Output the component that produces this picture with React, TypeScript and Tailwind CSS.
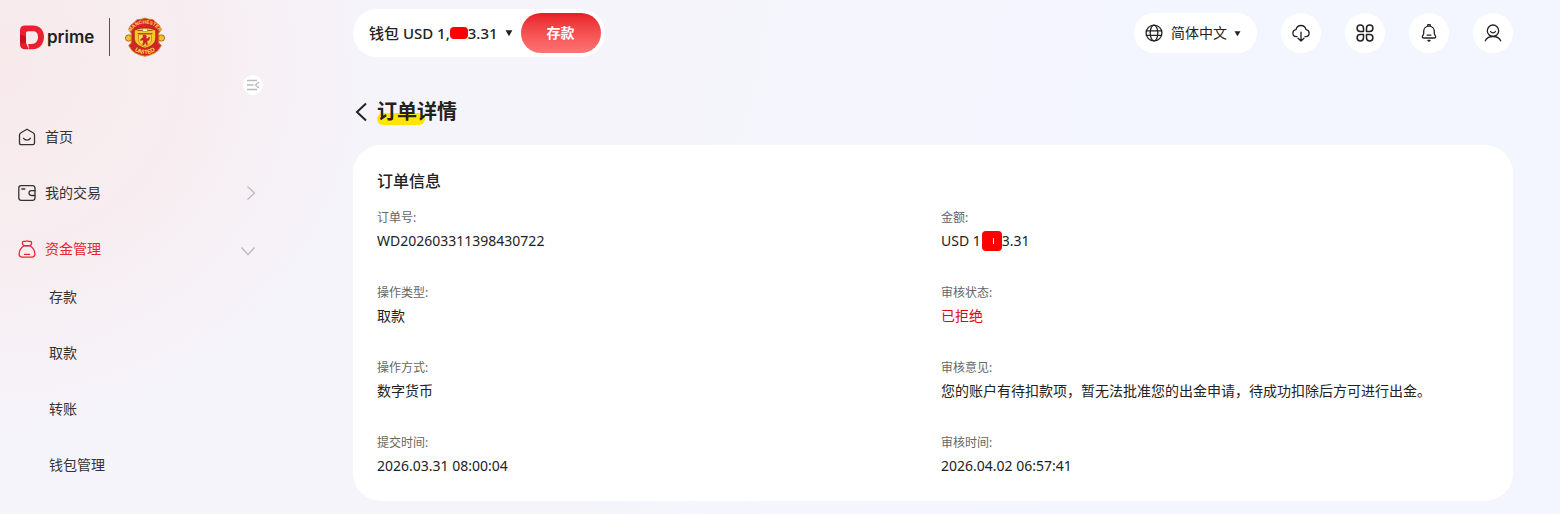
import React, { useState } from 'react'

type Field = {
  label: string
  value: React.ReactNode
  danger?: boolean
}

const subMenu = ['存款', '取款', '转账', '钱包管理']

// Order fields, two per row
const orderFields: Field[] = [
  { label: '订单号:', value: 'WD202603311398430722' },
  {
    label: '金额:',
    value: (
      <span className="flex items-center">
        USD 1
        <span className="ml-px flex h-5 w-5 items-center justify-center rounded bg-[#fe0000]">
          <span className="ml-1 h-1.5 w-px bg-white" />
        </span>
        3.31
      </span>
    ),
  },
  { label: '操作类型:', value: '取款' },
  { label: '审核状态:', value: '已拒绝', danger: true },
  { label: '操作方式:', value: '数字货币' },
  { label: '审核意见:', value: '您的账户有待扣款项，暂无法批准您的出金申请，待成功扣除后方可进行出金。' },
  { label: '提交时间:', value: '2026.03.31 08:00:04' },
  { label: '审核时间:', value: '2026.04.02 06:57:41' },
]

const Caret = ({ size }: { size: number }) => (
  <svg width={size} height={size} viewBox="0 0 8 8" fill="#222" aria-hidden="true">
    <path d="M0.600 1.300h6.800L4 7.200z" />
  </svg>
)

const BrandMark = () => (
  <svg width="25" height="25" viewBox="0 0 25 25" aria-hidden="true">
    <path d="M5 0.500H13C19.500 0.500 24 5 24 11.800C24 19 19.500 24.300 12.700 24.300H9L8.200 19H11.800C15.600 19 18 16 18 12C18 8.200 16.200 6.200 12.800 6.200H8C6.600 6.200 6 6.900 6 8.200V19L0 20.500V5.500C0 2.200 1.800 0.500 5 0.500Z" fill="#ec1f2e" />
    <path d="M0 9.500L6 11.500V18.300L4 22L0 19Z" fill="#c8131f" />
    <path d="M0 18.500L6 17.800L8.800 24.300H5C2 24.300 0 22.600 0 19.500Z" fill="#e51c2b" />
  </svg>
)

const ClubCrest = () => (
  <svg width="40" height="40" viewBox="0 0 40 40" role="img" aria-label="Manchester United">
    <circle cx="3.600" cy="21" r="3.200" fill="#f4c21f" stroke="#8c2a16" strokeWidth="0.6" />
    <circle cx="36.400" cy="21" r="3.200" fill="#f4c21f" stroke="#8c2a16" strokeWidth="0.6" />
    <path d="M20 1L24 2.300L28 2.500L30.500 5.200L34 8L36.500 12.500L33.800 16V26L36.300 28.500L33 33.500L29.500 36L25 38L20 39.200L15 38L10.500 36L7 33.500L3.700 28.500L6.200 26V16L3.500 12.500L6 8L9.500 5.200L12 2.500L16 2.300Z" fill="#d5232b" stroke="#c98a1c" strokeWidth="1" />
    <path d="M9.300 13.200Q20 8.200 30.700 13.200V21C30.700 26 26.500 29.500 20 31.200C13.500 29.500 9.300 26 9.300 21Z" fill="#f7c928" stroke="#8c2a16" strokeWidth="0.7" />
    <path d="M12.500 13.500h15M12.500 16.500h15" stroke="#a04a18" strokeWidth="0.9" />
    <path d="M17.500 14.500V12h1v-1h.8v1h1.400v-1h.8v1h1v2.500Z" fill="#fff3c0" stroke="#a04a18" strokeWidth="0.4" />
    <path d="M13.500 17.500h13v4.800c0 3.600-2.700 6-6.500 7.200-3.800-1.200-6.500-3.600-6.500-7.200Z" fill="#f9d84a" stroke="#c23a1c" strokeWidth="0.500" />
    <path d="M18.300 18l2.600.2.600 1.600-.8 1.400 2.300.6.900-1.800.9.600-.9 2.600-2 .8.700 3.600-1.300.2-1-2.800-1.500 3-1.200-.3.900-3.700-1.300-1.200-1.400.9-.4-.8 1.700-2 1.600-.3-.8-1.200Z" fill="#cf1f27" stroke="#cf1f27" strokeWidth="0.500" />
    <path id="crest-top" d="M5.800 15.500A15 13.200 0 0 1 34.200 15.500" fill="none" />
    <path id="crest-bottom" d="M6 29Q11 37 20 37T34 29" fill="none" />
    <text fontSize="4.800" fontWeight="700" fill="#ffe04a" textAnchor="middle" fontFamily="Liberation Sans, sans-serif">
      <textPath href="#crest-top" startOffset="50%">MANCHESTER</textPath>
    </text>
    <text fontSize="6" fontWeight="700" fill="#ffe04a" textAnchor="middle" fontFamily="Liberation Sans, sans-serif">
      <textPath href="#crest-bottom" startOffset="50%">UNITED</textPath>
    </text>
  </svg>
)

const lineIcon = {
  width: 18,
  height: 18,
  viewBox: '0 0 18 18',
  fill: 'none',
  stroke: 'currentColor',
  strokeWidth: 1.3,
  strokeLinecap: 'round' as const,
  strokeLinejoin: 'round' as const,
  'aria-hidden': true,
}

const HomeIcon = () => (
  <svg {...lineIcon}>
    <path d="M9 1.200L15 4.700C16 5.300 16.500 6 16.500 7V15C16.500 16.200 16 16.700 14.800 16.700H3.200C2 16.700 1.500 16.200 1.500 15V7C1.500 6 2 5.300 3 4.700Z" />
    <path d="M5.600 10.300C7.200 12.600 10.800 12.600 12.400 10.300" />
  </svg>
)

const WalletIcon = () => (
  <svg {...lineIcon}>
    <path d="M17 6.800V4.200C17 2.600 16.200 1.700 14.600 1.700H3.200C1.600 1.700.8 2.600.8 4.200V13.800C.8 15.400 1.600 16.300 3.200 16.300H14.600C16.200 16.300 17 15.400 17 13.800V11.600" />
    <path d="M17 6.700H13.300C11.800 6.700 11 7.700 11 9.100S11.800 11.500 13.300 11.500H17Z" />
    <path d="M3.800 5H6.800" />
  </svg>
)

const FundsIcon = () => (
  <svg {...lineIcon}>
    <path d="M5.800 5.600C4.500 4.600 4.200 2.800 4.900 1.500C6 .8 6.900 1.900 7.800 1.300C8.600.8 9.400.8 10.200 1.300C11.100 1.900 12 .8 13.100 1.500C13.800 2.800 13.500 4.600 12.200 5.600Z" />
    <path d="M5.800 5.800H12.200C14.600 7.600 16.900 10.800 16.900 13.900C16.900 16 15.700 17.100 13.600 17.100H4.400C2.300 17.100 1.100 16 1.100 13.900C1.100 10.800 3.400 7.600 5.800 5.800Z" />
    <path d="M6.500 14.300H11.500" />
  </svg>
)

const GlobeIcon = () => (
  <svg {...lineIcon}>
    <circle cx="9" cy="9" r="7.900" />
    <ellipse cx="9" cy="9" rx="3.800" ry="7.900" />
    <path d="M1.300 6.900H16.700M1.300 11.300H16.700" />
  </svg>
)

const DownloadIcon = () => (
  <svg {...lineIcon}>
    <path d="M5 12.700H4.300C2.300 12.500.9 11.100.9 9.200C.9 7.300 2.200 5.900 4 5.700C4.500 3.300 6.500 1.500 9 1.500S13.500 3.300 14 5.700C15.800 5.900 17.100 7.300 17.100 9.200C17.100 11.100 15.700 12.500 13.700 12.700H13" />
    <path d="M9 8.200V17M6 14.300L9 17.100L12 14.300" />
  </svg>
)

const AppsIcon = () => (
  <svg {...lineIcon} strokeWidth={1.5}>
    <path d="M4.300 1.100C6.300 1.100 7.500 2.300 7.500 4.300V7.500H4.300C2.300 7.500 1.100 6.300 1.100 4.300S2.300 1.100 4.300 1.100Z" />
    <path d="M13.700 1.100C15.700 1.100 16.900 2.300 16.900 4.300S15.700 7.500 13.700 7.500H10.500V4.300C10.500 2.300 11.700 1.100 13.700 1.100Z" />
    <path d="M4.300 10.500H7.500V13.700C7.500 15.700 6.300 16.900 4.300 16.900S1.100 15.700 1.100 13.700S2.300 10.500 4.300 10.500Z" />
    <path d="M10.500 10.500H13.700C15.700 10.500 16.900 11.700 16.900 13.700S15.700 16.900 13.700 16.900S10.500 15.700 10.500 13.700Z" />
  </svg>
)

const BellIcon = () => (
  <svg {...lineIcon}>
    <path d="M9 2.200C5.800 2.200 3.700 4.500 3.700 7.500V9.500C3.700 10.500 2.300 11.800 2.300 12.800C2.300 13.700 2.900 14 3.700 14H14.300C15.100 14 15.700 13.700 15.700 12.800C15.700 11.800 14.300 10.500 14.300 9.500V7.500C14.300 4.500 12.200 2.200 9 2.200Z" />
    <path d="M7.700 2V1.300C7.700.7 8.200.4 9 .4S10.300.7 10.300 1.300V2M7.200 11.200H10.800" />
    <path d="M8 16.400H10L9 17.200Z" fill="currentColor" />
  </svg>
)

const UserIcon = () => (
  <svg {...lineIcon}>
    <circle cx="9" cy="6.700" r="5.700" />
    <path d="M6.600 7.500C7.600 9.200 10.400 9.200 11.400 7.500" />
    <path d="M1.300 16.800C2.300 14.300 4.400 12.500 9 12.500S15.700 14.300 16.700 16.800" />
  </svg>
)

const actions = [
  { label: '下载', icon: <DownloadIcon /> },
  { label: '应用', icon: <AppsIcon /> },
  { label: '通知', icon: <BellIcon /> },
  { label: '账户', icon: <UserIcon /> },
]

export default function App() {
  const [fundsOpen, setFundsOpen] = useState(true)

  return (
    <div className="flex min-h-screen bg-[radial-gradient(circle_at_0px_60px,#f8eaeb_0px,#f7edf0_190px,#f6f4fb00_370px),linear-gradient(105deg,#f6f4fb_0%,#f5f4fb_40%,#f3f6ff_75%,#f3f6ff_100%)] font-['Noto_Sans','Noto_Sans_CJK_SC',sans-serif] text-sm text-[#222]">
      {/* Sidebar */}
      <aside className="w-[305px] shrink-0 pt-[17px] text-[#333]">
        <a href="#" className="flex h-10 items-center pl-5">
          <BrandMark />
          <span className="ml-0.5 w-[62px] font-['Inter',sans-serif] text-[17px] leading-5 font-semibold text-[#221f20]">prime</span>
          <span className="h-[38px] w-px bg-[#555]" />
          <span className="ml-[15px]">
            <ClubCrest />
          </span>
        </a>

        <button
          type="button"
          aria-label="收起菜单"
          className="mt-[18px] ml-[243px] flex h-5 w-5 items-center justify-center rounded-full bg-white"
        >
          <svg width="14" height="12" viewBox="0 0 14 12" fill="none" stroke="#bbb" strokeWidth="1.300" aria-hidden="true">
            <path d="M1 1.500H11M1 6H7.500M1 10.500H11M13 3L9.500 6L13 9" />
          </svg>
        </button>

        <nav className="mt-[18px] flex flex-col gap-2 pr-[49px] pl-[18px]">
          <a href="#" className="flex h-12 items-center gap-[9px]">
            <HomeIcon />
            首页
          </a>
          <button type="button" className="flex h-12 items-center gap-[9px]">
            <WalletIcon />
            我的交易
            <svg className="ml-auto" width="10" height="16" viewBox="0 0 10 16" fill="none" stroke="#bbb" strokeWidth="1.300" aria-hidden="true">
              <path d="M1.500 1.500L8.500 8L1.500 14.500" />
            </svg>
          </button>
          <div>
            <button
              type="button"
              aria-expanded={fundsOpen}
              onClick={() => setFundsOpen(!fundsOpen)}
              className="flex h-12 w-full items-center gap-[9px] text-[#e62433]"
            >
              <FundsIcon />
              资金管理
              <svg className="mt-1 ml-auto" width="16" height="10" viewBox="0 0 16 10" fill="none" stroke="#bbb" strokeWidth="1.300" aria-hidden="true">
                <path d="M1.500 1.500L8 8.500L14.500 1.500" />
              </svg>
            </button>
            {fundsOpen && (
              <ul className="flex flex-col gap-2 pl-[31px]">
                {subMenu.map((item) => (
                  <li key={item}>
                    <a href="#" className="flex h-12 items-center">{item}</a>
                  </li>
                ))}
              </ul>
            )}
          </div>
        </nav>
      </aside>

      <main className="min-w-0 flex-1 pt-[9px] pr-[47px] pb-3 pl-12">
        {/* Top bar */}
        <header className="flex items-center justify-between">
          <div className="flex h-12 items-center gap-2 rounded-full bg-white pr-1 pl-4">
            <button type="button" className="flex items-center text-[15px] leading-6 font-medium whitespace-pre">
              钱包 USD 1,
              <span className="h-3 w-[18px] rounded bg-[#fe0000]" />
              3.31
              <span className="ml-[7px]">
                <Caret size={8} />
              </span>
            </button>
            <button
              type="button"
              className="h-10 w-20 rounded-full bg-linear-to-b from-[#e81c26] to-[#ff7375] text-sm font-bold text-white"
            >
              存款
            </button>
          </div>

          <div className="flex items-center gap-6">
            <label className="flex h-10 items-center rounded-full bg-white pr-4 pl-[11px]">
              <GlobeIcon />
              <select aria-label="语言" className="ml-2 appearance-none bg-transparent text-sm outline-none">
                <option>简体中文</option>
              </select>
              <span className="ml-[7px]">
                <Caret size={7} />
              </span>
            </label>
            {actions.map((action) => (
              <button
                key={action.label}
                type="button"
                aria-label={action.label}
                className="flex h-10 w-10 items-center justify-center rounded-full bg-white"
              >
                {action.icon}
              </button>
            ))}
          </div>
        </header>

        {/* Page title */}
        <div className="mt-[41px] flex h-7 items-center">
          <button type="button" aria-label="返回" className="w-6 pl-0.5">
            <svg width="12" height="20" viewBox="0 0 12 20" fill="none" stroke="#222" strokeWidth="2" aria-hidden="true">
              <path d="M11 1.500L2 10L11 18.500" />
            </svg>
          </button>
          <h1 className="relative text-xl leading-7 font-bold">
            <span className="absolute bottom-px left-0 h-3 w-12 rounded-md bg-[#ffe600]" />
            <span className="relative">订单详情</span>
          </h1>
        </div>

        {/* Order card */}
        <section className="mt-[19px] rounded-[28px] bg-white p-6">
          <h2 className="text-base leading-6 font-medium">订单信息</h2>
          <dl className="mt-[15px] grid grid-cols-2 gap-x-4 gap-y-[31px]">
            {orderFields.map((field) => (
              <div key={field.label}>
                <dt className="text-xs leading-5 text-[#666]">{field.label}</dt>
                <dd className={`mt-0.5 leading-[22px] ${field.danger ? 'text-[#e60012]' : ''}`}>{field.value}</dd>
              </div>
            ))}
          </dl>
        </section>
      </main>
    </div>
  )
}
